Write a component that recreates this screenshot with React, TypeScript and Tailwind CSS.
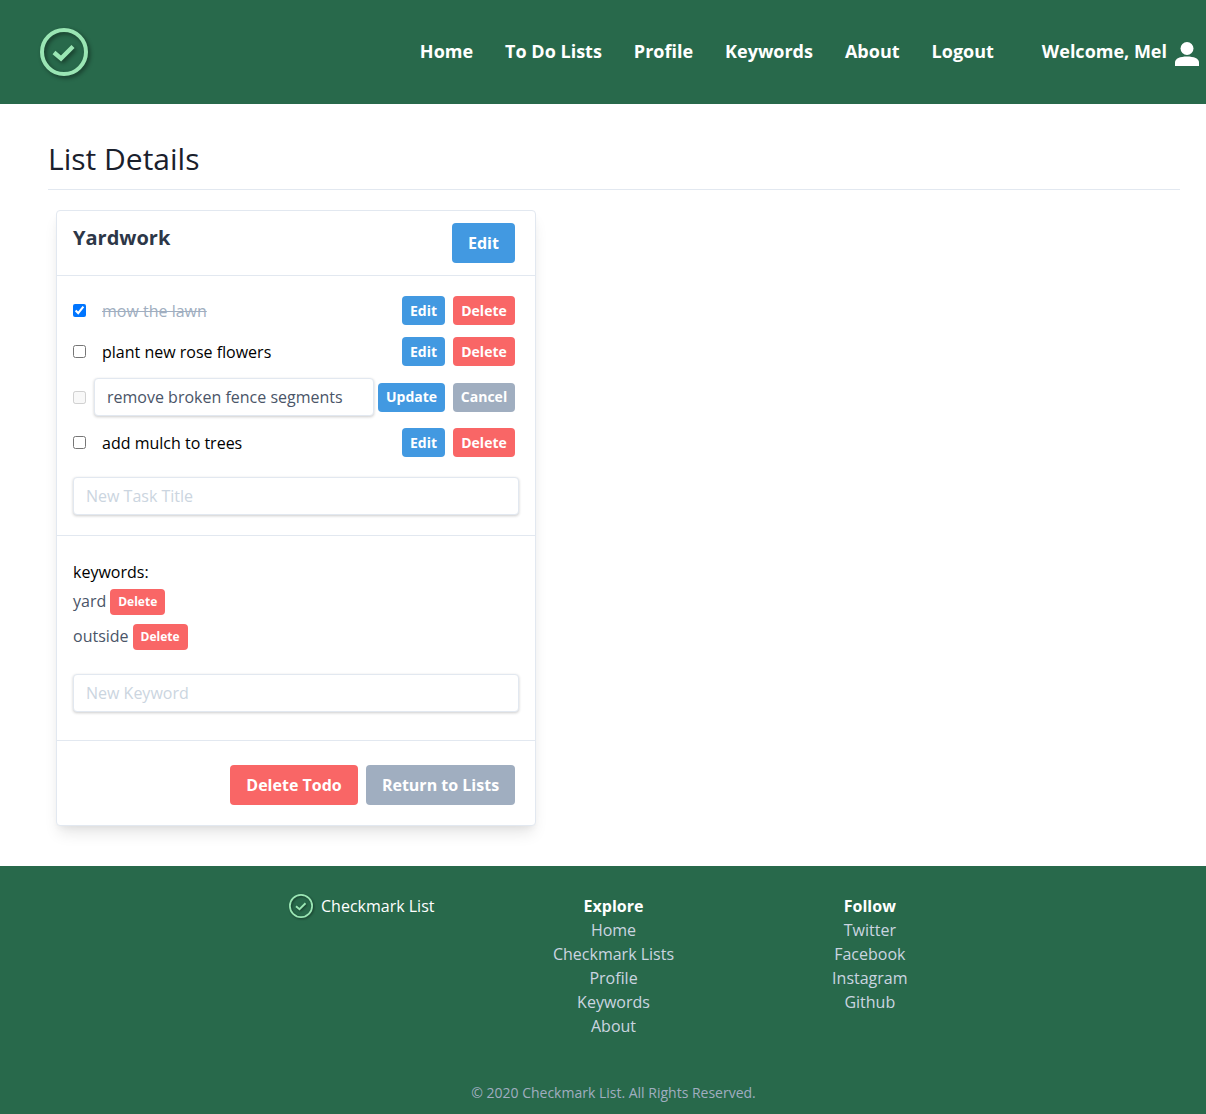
import React from "react";

function Logo({ size, sw, shadow }: { size: number; sw: number; shadow: string }) {
  return (
    <svg width={size} height={size} viewBox="0 0 48 48" fill="none" className={`block shrink-0 ${shadow}`}>
      <circle cx="24" cy="24" r={24 - sw / 2} stroke="#9ae6b4" strokeWidth={sw} />
      <path d="M14 24.5 L21 30.5 L33 18.5" stroke="#9ae6b4" strokeWidth={sw * 1.1} />
    </svg>
  );
}

const Btn = ({ children, className }: { children: React.ReactNode; className: string }) => (
  <button className={`flex items-center justify-center rounded text-white font-bold ${className}`}>{children}</button>
);

function SmallBtn({ label, color, w }: { label: string; color: string; w: string }) {
  return <Btn className={`h-[29px] text-sm ${color} ${w}`}>{label}</Btn>;
}

function TaskRow({ text, checked, done }: { text: string; checked?: boolean; done?: boolean }) {
  return (
    <div className="flex items-center h-[29px]">
      <input type="checkbox" defaultChecked={checked} className="w-[13px] h-[13px] m-0 appearance-auto" />
      <span className={`ml-4 flex-1 ${done ? "line-through text-[#a0aec0]" : "text-black"}`}>{text}</span>
      <SmallBtn label="Edit" color="bg-[#4299e1]" w="w-[43px]" />
      <SmallBtn label="Delete" color="bg-[#f96666] ml-2" w="w-[62px]" />
    </div>
  );
}

function Field({ placeholder }: { placeholder: string }) {
  return (
    <input
      placeholder={placeholder}
      className="block w-[446px] h-[38px] px-3 rounded border border-[#e2e8f0] bg-white shadow-[0_1px_3px_rgba(0,0,0,0.2)] placeholder:text-[#cbd5e0] outline-none"
    />
  );
}

function Keyword({ text, color, className }: { text: string; color: string; className: string }) {
  return (
    <div className={`flex items-center h-[26px] ${className}`}>
      <span className={`${color} -translate-y-px`}>{text}</span>
      <Btn className="ml-1 h-[26px] w-[55px] text-xs bg-[#f96666]">Delete</Btn>
    </div>
  );
}

export default function App() {
  const nav = ["Home", "To Do Lists", "Profile", "Keywords", "About", "Logout"];
  const explore = ["Home", "Checkmark Lists", "Profile", "Keywords", "About"];
  const follow = ["Twitter", "Facebook", "Instagram", "Github"];
  return (
    <div className="font-['Open_Sans',sans-serif] text-base text-black bg-white">
      <header className="h-[104px] bg-[#28694b] flex items-center pl-10 pr-[7px] text-white">
        <Logo size={48} sw={4} shadow="drop-shadow-[2px_2px_2px_rgba(0,0,0,0.45)]" />
        <nav className="ml-auto flex items-center gap-8 text-lg font-bold pb-[2px]">
          {nav.map((n) => (
            <a key={n}>{n}</a>
          ))}
        </nav>
        <div className="ml-12 flex items-center text-lg font-bold">
          <span className="pb-[2px]">Welcome, Mel</span>
          <svg viewBox="0 0 24 24" width="24" height="24" fill="white" className="ml-2 mt-1">
            <circle cx="12" cy="6.5" r="6.5" />
            <path d="M0 24v-3.5C0 16.5 5 14.5 12 14.5s12 2 12 6V24z" />
          </svg>
        </div>
      </header>

      <main className="h-[762px] pt-[32px] pl-[48px] pr-[26px]">
        <h1 className="text-[30px] leading-[45px] pb-[8px] border-b border-[#e2e8f0] text-[#1a202c]">List Details</h1>
        <section className="mt-5 ml-2 w-[480px] h-[616px] flex flex-col rounded border border-[#e2e8f0] bg-white shadow-[0_10px_15px_-3px_rgba(0,0,0,0.1),0_4px_6px_-2px_rgba(0,0,0,0.05)]">
          <div className="h-[65px] shrink-0 flex items-start justify-between border-b border-[#e2e8f0] pl-4 pr-5 pt-3">
            <h2 className="text-xl font-bold text-[#2d3748] leading-[30px]">Yardwork</h2>
            <Btn className="w-[63px] h-10 bg-[#4299e1]">Edit</Btn>
          </div>

          <div className="h-[260px] shrink-0 border-b border-[#e2e8f0] pl-4 pr-5 pt-5">
            <TaskRow text="mow the lawn" checked done />
            <div className="mt-3">
              <TaskRow text="plant new rose flowers" />
            </div>
            <div className="flex items-center mt-3 h-[38px]">
              <input type="checkbox" disabled className="w-[13px] h-[13px] m-0" />
              <input
                defaultValue="remove broken fence segments"
                className="ml-2 w-[280px] h-[38px] px-3 rounded border border-[#e2e8f0] bg-white text-[#4a5568] shadow-[0_1px_3px_rgba(0,0,0,0.2)] outline-none"
              />
              <SmallBtn label="Update" color="bg-[#4299e1] ml-1" w="w-[67px]" />
              <SmallBtn label="Cancel" color="bg-[#a0aec0] ml-2" w="w-[62px]" />
            </div>
            <div className="mt-3">
              <TaskRow text="add mulch to trees" />
            </div>
            <div className="mt-5">
              <Field placeholder="New Task Title" />
            </div>
          </div>

          <div className="h-[205px] shrink-0 border-b border-[#e2e8f0] pl-4 pr-5 pt-6">
            <div className="leading-6">keywords:</div>
            <Keyword text="yard" color="text-[#4a5568]" className="mt-[5px]" />
            <Keyword text="outside" color="text-[#4a5568]" className="mt-[9px]" />
            <div className="mt-6">
              <Field placeholder="New Keyword" />
            </div>
          </div>

          <div className="flex-1 flex justify-end gap-2 pr-5 pt-6">
            <Btn className="w-[128px] h-10 bg-[#f96666]">Delete Todo</Btn>
            <Btn className="w-[149px] h-10 bg-[#a0aec0]">Return to Lists</Btn>
          </div>
        </section>
      </main>

      <footer className="h-[248px] bg-[#28694b] text-[#cbd5e0]">
        <div className="ml-[229px] w-[769px] pt-7">
          <div className="grid grid-cols-3 leading-6 text-center h-[189px]">
            <div className="flex items-start pl-[60px] text-white">
              <Logo size={24} sw={3.5} shadow="drop-shadow-[1px_1px_1px_rgba(0,0,0,0.45)]" />
              <span className="ml-2">Checkmark List</span>
            </div>
            <div className="flex flex-col">
              <span className="font-bold text-white">Explore</span>
              {explore.map((e) => (
                <a key={e}>{e}</a>
              ))}
            </div>
            <div className="flex flex-col">
              <span className="font-bold text-white">Follow</span>
              {follow.map((e) => (
                <a key={e}>{e}</a>
              ))}
            </div>
          </div>
          <p className="text-sm leading-5 text-center text-[#a0aec0]">© 2020 Checkmark List. All Rights Reserved.</p>
        </div>
      </footer>
    </div>
  );
}
